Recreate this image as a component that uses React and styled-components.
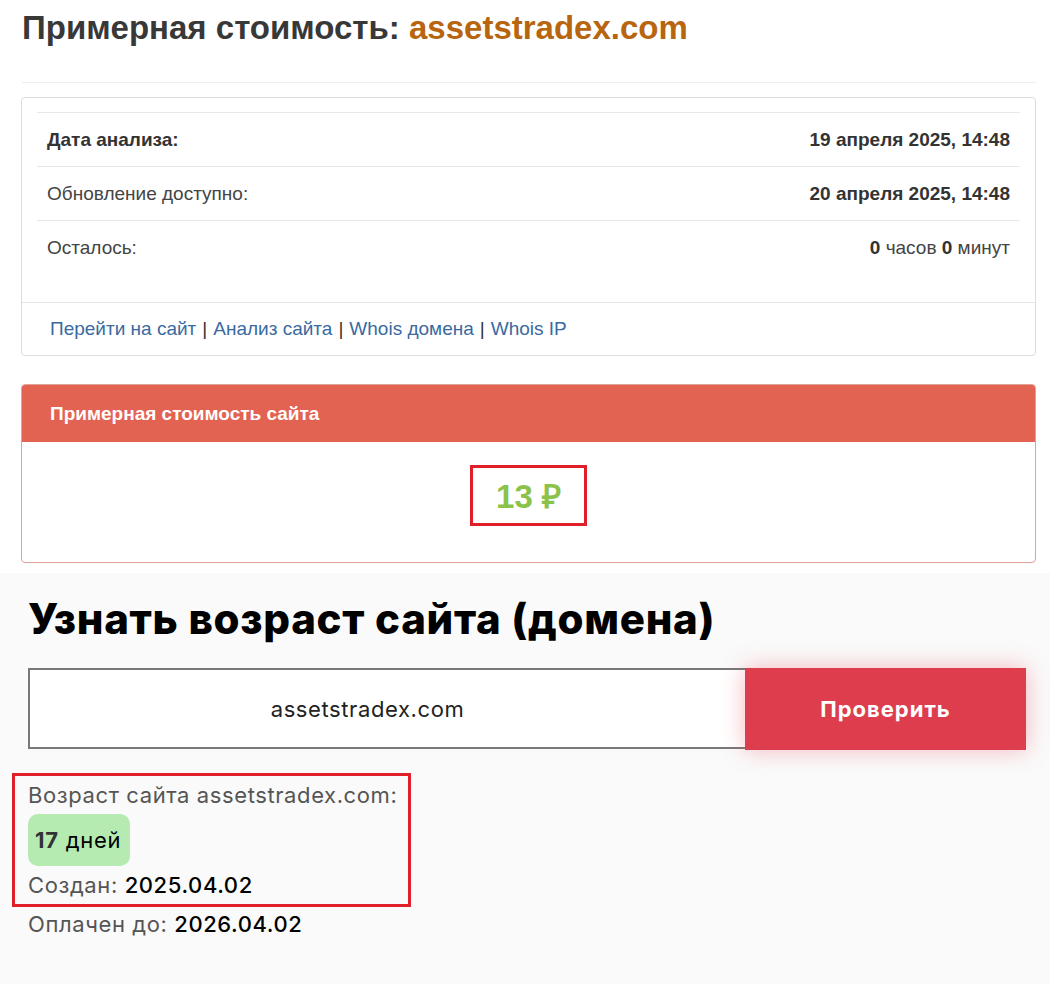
import React from "react";
import styled, { createGlobalStyle } from "styled-components";

const GlobalStyle = createGlobalStyle`
  html, body { margin: 0; padding: 0; background: #ffffff; }
  body { font-family: "Liberation Sans", Arial, sans-serif; }
  * { box-sizing: border-box; }
`;

const Top = styled.div`
  padding: 10px 14px 0 21px;
`;

const Title = styled.h1`
  margin: 0 0 0 1px;
  font-size: 33px;
  line-height: 36px;
  font-weight: 700;
  color: #383838;
`;

const Domain = styled.span`
  color: #b7650e;
`;

const Rule = styled.hr`
  margin: 36px 0 14px 1px;
  border: 0;
  border-top: 1px solid #eeeeee;
`;

const Panel = styled.div`
  border: 1px solid ${(p) => p.$border || "#dddddd"};
  border-radius: 4px;
  background: #fff;
  overflow: hidden;
  margin-bottom: ${(p) => p.$mb || 0}px;
`;

const PanelBody = styled.div`
  padding: 14px 15px 15px;
`;

const InfoTable = styled.div`
  display: flex;
  flex-direction: column;
  margin-bottom: 13px;
`;

const Row = styled.div`
  display: flex;
  justify-content: space-between;
  align-items: center;
  height: 54px;
  padding: 0 10px;
  border-top: 1px solid #e8e8e8;
  font-size: 19px;
  color: #444;
`;

const Label = styled.span`
  font-weight: ${(p) => (p.$bold ? 700 : 400)};
  color: ${(p) => (p.$bold ? "#333" : "#444")};
`;

const Value = styled.span`
  color: #444;
  b { color: #333; font-weight: 700; }
`;

const Footer = styled.div`
  border-top: 1px solid #e5e5e5;
  height: 53px;
  display: flex;
  align-items: center;
  padding: 0 28px;
  font-size: 19px;
  color: #333;
`;

const Link = styled.a`
  color: #3a6aa0;
  text-decoration: none;
`;

const Sep = styled.span`
  margin: 0 6px 0 6px;
  color: #333;
`;

const RedHead = styled.div`
  background: #e36352;
  height: 57px;
  display: flex;
  align-items: center;
  padding: 0 28px;
  color: #fff;
  font-size: 19px;
  font-weight: 700;
`;

const PriceBody = styled.div`
  display: flex;
  justify-content: center;
  padding: 23px 0 36px;
`;

const Mark = styled.div`
  border: 3px solid #e11f2b;
`;

const Price = styled(Mark)`
  width: 117px;
  height: 61px;
  display: flex;
  align-items: center;
  justify-content: center;
  color: #8bc34a;
  font-size: 33px;
  font-weight: 700;
`;

const Bottom = styled.div`
  margin-top: 10px;
  background: #fafafa;
  min-height: 411px;
  padding: 22px 24px 40px 28px;
  font-family: Inter, "Noto Sans", sans-serif;
`;

const Heading = styled.h2`
  margin: 0;
  font-size: 42px;
  line-height: 48px;
  font-weight: 800;
  color: #000;
  letter-spacing: 0.7px;
`;

const Form = styled.div`
  display: flex;
  margin-top: 25px;
  height: 82px;
`;

const Input = styled.div`
  flex: 1;
  height: 81px;
  border: 2px solid #787878;
  border-right: none;
  background: #fff;
  display: flex;
  align-items: center;
  justify-content: center;
  padding-right: 40px;
  font-size: 22px;
  letter-spacing: 0.6px;
  color: #222;
`;

const Button = styled.button`
  width: 281px;
  height: 82px;
  border: 0;
  background: #dd3d4c;
  color: #fff;
  font-family: inherit;
  font-size: 22px;
  letter-spacing: 1px;
  font-weight: 700;
  box-shadow: 0 0 22px rgba(230, 60, 76, 0.35);
`;

const Result = styled.div`
  margin-top: 23px;
  display: flex;
  flex-direction: column;
  align-items: flex-start;
`;

const ResultMark = styled(Mark)`
  margin-left: -16px;
  padding: 0 11px 0 13px;
  display: flex;
  flex-direction: column;
  align-items: flex-start;
`;

const Line = styled.div`
  font-size: 22px;
  letter-spacing: 0.6px;
  line-height: ${(p) => p.$lh || 38}px;
  color: #555;
  b { color: #000; font-weight: 500; }
`;

const Badge = styled.div`
  height: 52px;
  display: flex;
  align-items: center;
  padding: 0 9px 0 7px;
  background: #b5eab1;
  border-radius: 10px;
  font-size: 22px;
  letter-spacing: 0.7px;
  color: #000;
  b { color: #333; font-weight: 700; margin-right: 7px; }
`;

export default function App() {
  return (
    <>
      <GlobalStyle />
      <Top>
        <Title>
          Примерная стоимость: <Domain>assetstradex.com</Domain>
        </Title>
        <Rule />
        <Panel $mb={28}>
          <PanelBody>
            <InfoTable>
              <Row>
                <Label $bold>Дата анализа:</Label>
                <Value><b>19 апреля 2025, 14:48</b></Value>
              </Row>
              <Row>
                <Label>Обновление доступно:</Label>
                <Value><b>20 апреля 2025, 14:48</b></Value>
              </Row>
              <Row>
                <Label>Осталось:</Label>
                <Value><b>0</b> часов <b>0</b> минут</Value>
              </Row>
            </InfoTable>
          </PanelBody>
          <Footer>
            <Link href="#">Перейти на сайт</Link>
            <Sep>|</Sep>
            <Link href="#">Анализ сайта</Link>
            <Sep>|</Sep>
            <Link href="#">Whois домена</Link>
            <Sep>|</Sep>
            <Link href="#">Whois IP</Link>
          </Footer>
        </Panel>
        <Panel $border="#e0a197">
          <RedHead>Примерная стоимость сайта</RedHead>
          <PriceBody>
            <Price>13 ₽</Price>
          </PriceBody>
        </Panel>
      </Top>
      <Bottom>
        <Heading>Узнать возраст сайта (домена)</Heading>
        <Form>
          <Input>assetstradex.com</Input>
          <Button>Проверить</Button>
        </Form>
        <Result>
          <ResultMark>
            <Line>Возраст сайта assetstradex.com:</Line>
            <Badge><b>17</b>дней</Badge>
            <Line>Создан: <b>2025.04.02</b></Line>
          </ResultMark>
          <Line $lh={34}>Оплачен до: <b>2026.04.02</b></Line>
        </Result>
      </Bottom>
    </>
  );
}
